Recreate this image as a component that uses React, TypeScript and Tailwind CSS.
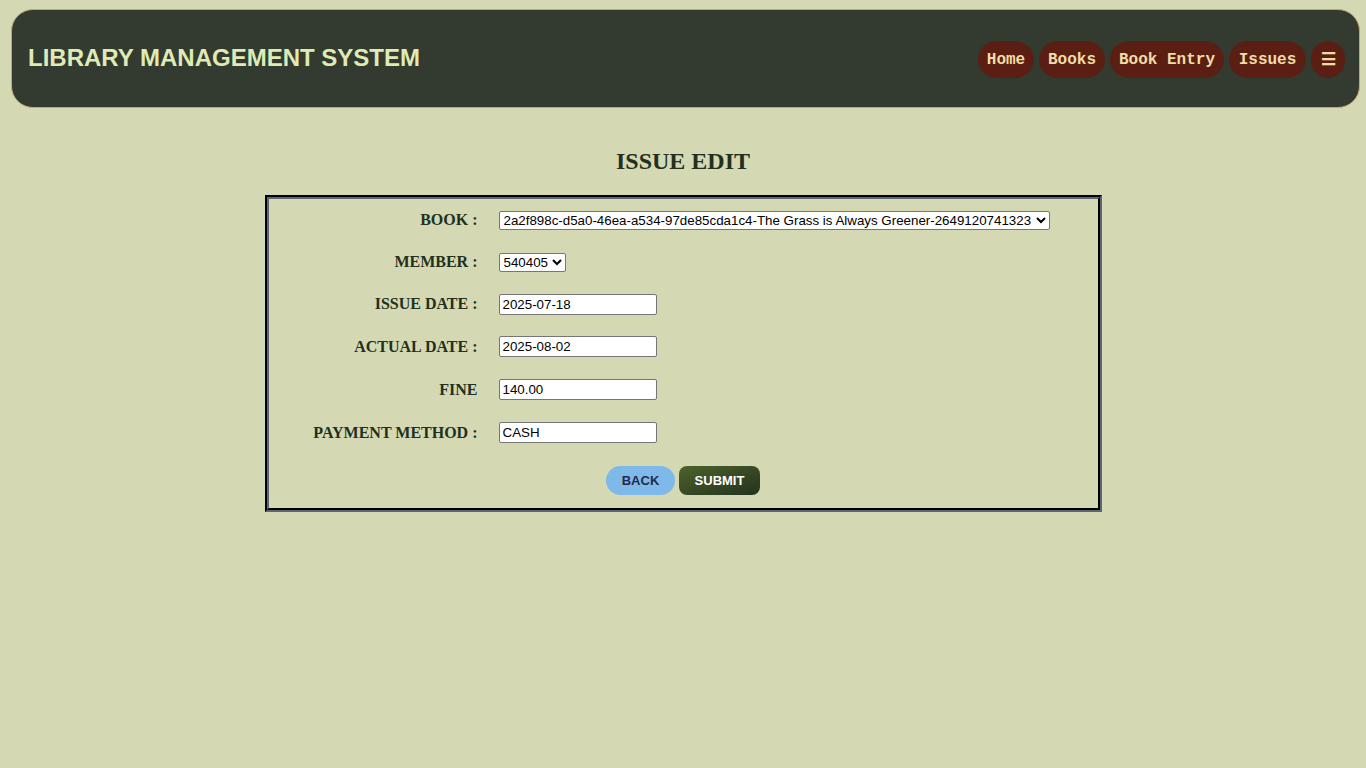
import { useState } from "react";

const navLinks = [
  { label: "Home", w: "w-[56px]" },
  { label: "Books", w: "w-[66px]" },
  { label: "Book Entry", w: "w-[114px]" },
  { label: "Issues", w: "w-[77px]" },
];

const Row = ({ label, h, children }: { label: string; h: string; children: React.ReactNode }) => (
  <div className={`grid grid-cols-[209px_1fr] gap-x-[21px] items-center ${h}`}>
    <label className="text-right font-bold text-[16px] text-[#22301d] font-['Liberation_Serif',serif]">
      {label}
    </label>
    <div className="flex items-center">{children}</div>
  </div>
);

const inputCls =
  "w-[158px] h-[21px] border border-[#767676] rounded-[2px] bg-white px-[3px] text-[13.33px] text-black font-['Liberation_Sans',Arial,sans-serif] outline-none";

const selectCls =
  "border border-[#767676] rounded-[2px] bg-white text-[13.33px] text-black font-['Liberation_Sans',Arial,sans-serif] outline-none";

export default function App() {
  const [issueDate, setIssueDate] = useState("2025-07-18");
  const [actualDate, setActualDate] = useState("2025-08-02");
  const [fine, setFine] = useState("140.00");
  const [payment, setPayment] = useState("CASH");

  return (
    <div className="min-h-screen bg-[#d4d9b4] pt-[9px] font-['Liberation_Sans',Arial,sans-serif]">
      {/* Header */}
      <header className="ml-[11px] mr-[6px] h-[99px] flex items-center justify-between rounded-[22px] border border-[#c9a472] bg-[#333a30] pl-[16px] pr-[14px]">
        <h1 className="text-[24px] font-bold text-[#dfeab4] mb-[2px]">LIBRARY MANAGEMENT SYSTEM</h1>
        <nav className="flex items-center gap-[5px] mt-[2px]">
          {navLinks.map((l) => (
            <a
              key={l.label}
              href="#"
              className={`h-[37px] ${l.w} flex items-center justify-center rounded-full bg-[#5a1f12] text-[#f3dca8] font-bold text-[16px] whitespace-pre font-['Liberation_Mono','Courier_New',monospace]`}
            >
              {l.label}
            </a>
          ))}
          <button className="h-[37px] w-[34px] flex items-center justify-center rounded-full bg-[#5a1f12] text-[#f3dca8] text-[17px] font-bold">
            ☰
          </button>
        </nav>
      </header>

      <h2 className="mt-[37px] text-center text-[24px] leading-[32px] font-bold text-[#22301d] font-['Liberation_Serif',serif]">
        ISSUE EDIT
      </h2>

      {/* Form table */}
      <div className="mt-[18px] mx-auto w-[837px] border-2 border-t-black border-l-black border-r-[#5c6670] border-b-[#5c6670]">
        <div className="border-2 border-t-[#5c6670] border-l-[#5c6670] border-r-black border-b-black">
          <div className="flex flex-col pb-[13px]">
            <Row label="BOOK :" h="h-[42px]">
              <select className={`${selectCls} w-[551px] h-[19px]`} defaultValue="a">
                <option value="a">2a2f898c-d5a0-46ea-a534-97de85cda1c4-The Grass is Always Greener-2649120741323</option>
              </select>
            </Row>
            <Row label="MEMBER :" h="h-[42px]">
              <select className={`${selectCls} w-[67px] h-[19px]`} defaultValue="540405">
                <option value="540405">540405</option>
              </select>
            </Row>
            <Row label="ISSUE DATE :" h="h-[42px]">
              <input className={inputCls} value={issueDate} onChange={(e) => setIssueDate(e.target.value)} />
            </Row>
            <Row label="ACTUAL DATE :" h="h-[43px]">
              <input className={inputCls} value={actualDate} onChange={(e) => setActualDate(e.target.value)} />
            </Row>
            <Row label="FINE" h="h-[43px]">
              <input className={inputCls} value={fine} onChange={(e) => setFine(e.target.value)} />
            </Row>
            <Row label="PAYMENT METHOD :" h="h-[43px]">
              <input className={inputCls} value={payment} onChange={(e) => setPayment(e.target.value)} />
            </Row>

            <div className="flex justify-center gap-[4px] pt-[12px]">
              <button className="h-[29px] w-[69px] rounded-full bg-[#7fb9ea] text-[#1f2a4f] text-[13px] font-bold">
                BACK
              </button>
              <button className="h-[29px] w-[81px] rounded-[8px] bg-linear-to-br from-[#4d632b] to-[#24321e] text-white text-[13px] font-bold">
                SUBMIT
              </button>
            </div>
          </div>
        </div>
      </div>
    </div>
  );
}
